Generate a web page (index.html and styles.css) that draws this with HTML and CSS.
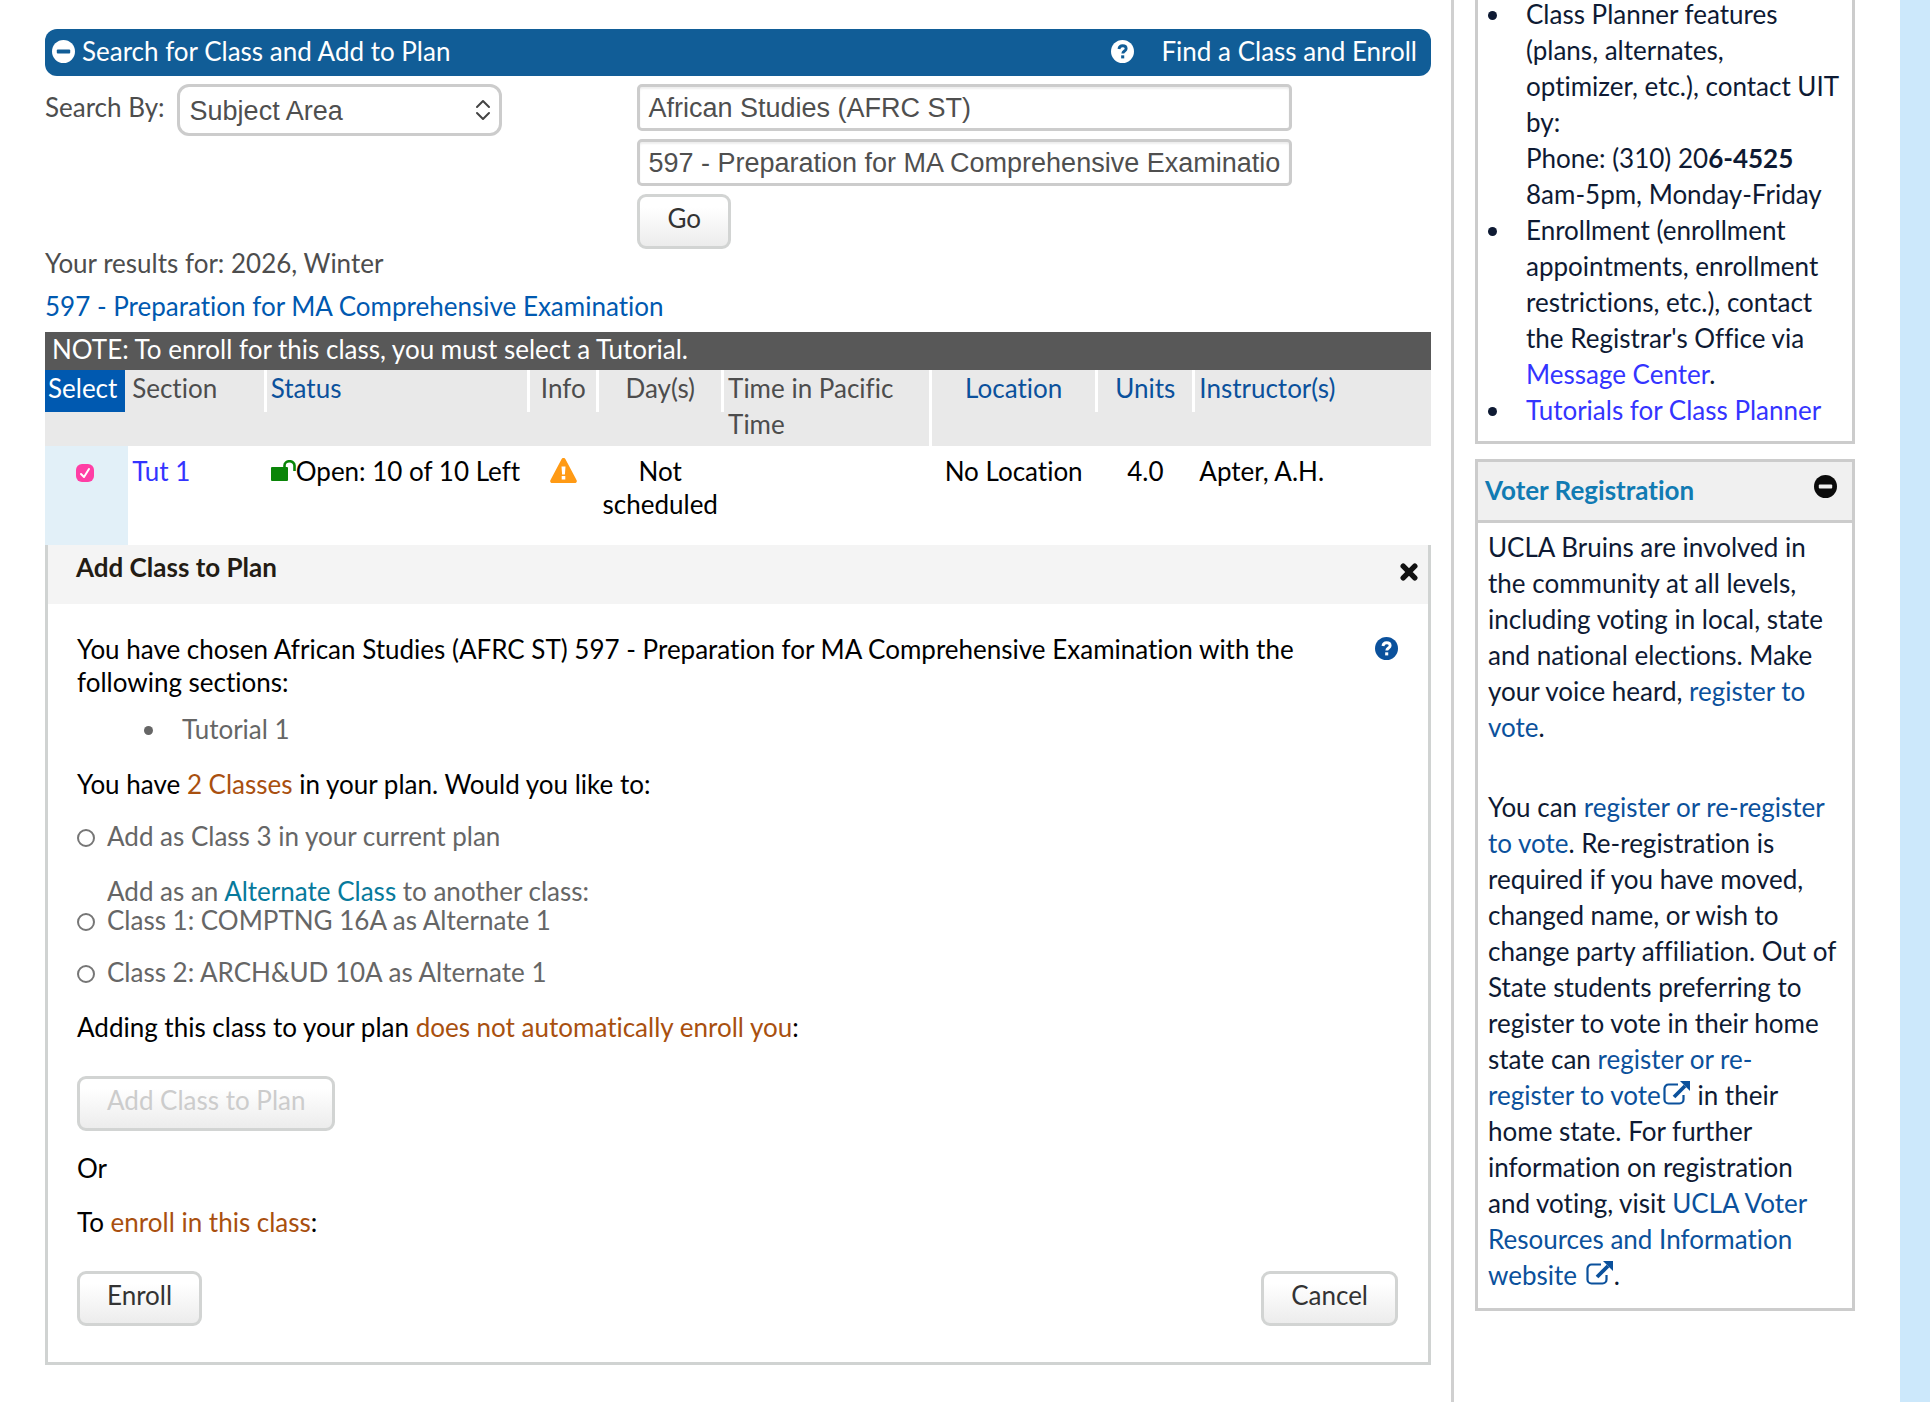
FILE: index.html
```html
<!DOCTYPE html>
<html lang="en">
<head>
<meta charset="utf-8">
<title>Class Planner</title>
<link rel="stylesheet" href="styles.css">
</head>
<body>
<div class="page">
  <main class="main">
    <div class="search-bar">
      <button class="search-toggle" type="button">
        <svg class="icon icon-round" viewBox="0 0 24 24" aria-hidden="true"><circle cx="12" cy="12" r="12" fill="#fff"/><rect x="5" y="10" width="14" height="4" rx="1" fill="#115d97"/></svg>
        Search for Class and Add to Plan
      </button>
      <div class="search-links">
        <svg class="icon icon-round" viewBox="0 0 24 24" aria-hidden="true"><circle cx="12" cy="12" r="12" fill="#fff"/><path d="M8.3 9.4C8.6 7.2 10 6 12.1 6c2.2 0 3.7 1.2 3.7 3 0 2.4-3.5 2.6-3.5 5.2" fill="none" stroke="#115d97" stroke-width="3"/><rect x="10.6" y="16" width="3.2" height="3.2" fill="#115d97"/></svg>
        <a href="#find">Find a Class and Enroll</a>
      </div>
    </div>

    <form class="search-form">
      <div class="search-by">
        <label for="search-by">Search By:</label>
        <select id="search-by" class="field select"><option>Subject Area</option></select>
      </div>
      <div class="search-fields">
        <input class="field text-field" type="text" aria-label="Subject area" value="African Studies (AFRC ST)">
        <input class="field text-field" type="text" aria-label="Class" value="597 - Preparation for MA Comprehensive Examination">
        <button class="button" type="button">Go</button>
      </div>
    </form>

    <p class="results-for">Your results for: 2026, Winter</p>
    <p class="class-title"><a href="#class">597 - Preparation for MA Comprehensive Examination</a></p>

    <p class="note">NOTE: To enroll for this class, you must select a Tutorial.</p>
    <table class="sections">
      <colgroup><col class="w-select"><col class="w-section"><col class="w-status"><col class="w-info"><col class="w-days"><col class="w-time"><col class="w-location"><col class="w-units"><col class="w-instructor"></colgroup>
      <thead>
        <tr>
          <th class="select-head" scope="col">Select</th>
          <th scope="col">Section</th>
          <th scope="col"><a href="#status">Status</a></th>
          <th class="center" scope="col">Info</th>
          <th class="center" scope="col">Day(s)</th>
          <th class="tall" scope="col">Time in Pacific Time</th>
          <th class="center" scope="col"><a href="#location">Location</a></th>
          <th class="center" scope="col"><a href="#units">Units</a></th>
          <th class="last" scope="col"><a href="#instructor">Instructor(s)</a></th>
        </tr>
      </thead>
      <tbody>
        <tr>
          <td class="select-cell"><input class="check" type="checkbox" aria-label="Select Tutorial 1" checked></td>
          <td><a class="bright" href="#tut1">Tut 1</a></td>
          <td><svg class="lock" viewBox="0 0 25 21" aria-hidden="true"><rect x="0" y="7" width="17" height="14" rx="1" fill="#0a8508"/><path d="M13.500 8V5.500a5 4.300 0 0 1 10 0V11" fill="none" stroke="#0a8508" stroke-width="2.600"/></svg>Open: 10 of 10 Left</td>
          <td class="center"><svg class="warn" viewBox="0 0 27 25" aria-label="Warning"><path d="M13.500 0c1 0 1.600.5 2 1.200l11 20.800c.8 1.500 0 3-1.800 3H2.300c-1.800 0-2.600-1.500-1.800-3l11-20.800c.4-.7 1-1.200 2-1.200z" fill="#ff9a14"/><path d="M11.500 8.500h4l-.6 8h-2.800zM11.700 18h3.600v3.500h-3.600z" fill="#fff"/></svg></td>
          <td class="center">Not scheduled</td>
          <td></td>
          <td class="center">No Location</td>
          <td class="center">4.0</td>
          <td>Apter, A.H.</td>
        </tr>
      </tbody>
    </table>

    <section class="panel">
      <header class="panel-head">
        <h2>Add Class to Plan</h2>
        <button class="close" type="button" aria-label="Close"><svg viewBox="0 0 18 18" aria-hidden="true"><path d="M3.200 3.200l11.600 11.600M14.800 3.200L3.200 14.800" stroke="#111" stroke-width="5.400" stroke-linecap="round"/></svg></button>
      </header>
      <div class="panel-body">
        <div class="chosen">
          <p>You have chosen African Studies (AFRC ST) 597 - Preparation for MA Comprehensive Examination with the following sections:</p>
          <svg class="icon icon-round" viewBox="0 0 24 24" aria-label="Help"><circle cx="12" cy="12" r="12" fill="#0b519c"/><path d="M8.300 9.400C8.600 7.200 10 6 12.100 6c2.200 0 3.700 1.200 3.700 3 0 2.400-3.500 2.600-3.500 5.200" fill="none" stroke="#fff" stroke-width="3"/><rect x="10.600" y="16" width="3.200" height="3.200" fill="#fff"/></svg>
        </div>
        <ul class="chosen-list"><li>Tutorial 1</li></ul>
        <p class="question">You have <span class="accent">2 Classes</span> in your plan. Would you like to:</p>
        <div class="options">
          <label class="option"><input class="radio" type="radio" name="plan">Add as Class 3 in your current plan</label>
          <p class="option-title">Add as an <a class="teal" href="#alternate">Alternate Class</a> to another class:</p>
          <label class="option"><input class="radio" type="radio" name="plan">Class 1: COMPTNG 16A as Alternate 1</label>
          <label class="option spaced"><input class="radio" type="radio" name="plan">Class 2: ARCH&amp;UD 10A as Alternate 1</label>
        </div>
        <p class="adding">Adding this class to your plan <span class="accent">does not automatically enroll you</span>:</p>
        <button class="button" type="button" disabled>Add Class to Plan</button>
        <p class="step">Or</p>
        <p class="step">To <span class="accent">enroll in this class</span>:</p>
        <div class="actions">
          <button class="button" type="button">Enroll</button>
          <button class="button" type="button">Cancel</button>
        </div>
      </div>
    </section>
  </main>

  <aside class="side">
    <section class="box help-box">
      <ul>
        <li>Class Planner features (plans, alternates, optimizer, etc.), contact UIT by:<br>Phone: (310) 20<b>6-4525</b><br>8am-5pm, Monday-Friday</li>
        <li>Enrollment (enrollment appointments, enrollment restrictions, etc.), contact the Registrar's Office via <a class="bright" href="#messages">Message Center</a>.</li>
        <li><a class="bright" href="#tutorials">Tutorials for Class Planner</a></li>
      </ul>
    </section>
    <section class="box">
      <header class="box-head">
        <h2>Voter Registration</h2>
        <button class="collapse" type="button" aria-label="Collapse"><svg class="icon icon-round" viewBox="0 0 24 24" aria-hidden="true"><circle cx="12" cy="12" r="12" fill="#0b0b0b"/><rect x="5" y="10" width="14" height="4" rx="1" fill="#f0f0f0"/></svg></button>
      </header>
      <div class="box-body">
        <p>UCLA Bruins are involved in the community at all levels, including voting in local, state and national elections. Make your voice heard, <a href="#r1">register to vote</a>.</p>
        <p>You can <a href="#r2">register or re-register to vote</a>. Re-registration is required if you have moved, changed name, or wish to change party affiliation. Out of State students preferring to register to vote in their home state can <a href="#r3">register or re-register to vote<svg class="external" viewBox="0 0 30 24" aria-hidden="true"><path d="M17 3.500H7.500a4 4 0 0 0-4 4v11a4 4 0 0 0 4 4h11a4 4 0 0 0 4-4V14" fill="none" stroke="#0b519c" stroke-width="2.200"/><path d="M13 16L24 5" stroke="#0b519c" stroke-width="3.800"/><path d="M19 0h10v10z" fill="#0b519c"/></svg></a> in their home state. For further information on registration and voting, visit <a href="#r4">UCLA Voter Resources and Information website <svg class="external" viewBox="0 0 30 24" aria-hidden="true"><path d="M17 3.500H7.500a4 4 0 0 0-4 4v11a4 4 0 0 0 4 4h11a4 4 0 0 0 4-4V14" fill="none" stroke="#0b519c" stroke-width="2.200"/><path d="M13 16L24 5" stroke="#0b519c" stroke-width="3.800"/><path d="M19 0h10v10z" fill="#0b519c"/></svg></a>.</p>
      </div>
    </section>
  </aside>
</div>
</body>
</html>
```
FILE: styles.css
```css
* { box-sizing: border-box; }
body {
  margin: 0;
  background: #cce8fb;
  color: #000;
  font-family: Lato, "Open Sans", sans-serif;
  font-size: 26px;
  font-variant-ligatures: none;
  line-height: 33px;
}
p, h2, ul { margin: 0; padding: 0; }
h2 { font-size: inherit; font-weight: 700; }
a { color: #0b519c; text-decoration: none; }
button { font: inherit; cursor: pointer; }
.bright { color: #3434ff; }
.teal { color: #077a9c; }
.accent { color: #a9500f; }
.icon { display: block; flex: none; }
.icon-round { width: 23px; height: 23px; }

.page {
  display: grid;
  grid-template-columns: minmax(0, 1fr) 446px;
  min-height: 100vh;
  margin-right: 30px;
  background: #fff;
}
.main {
  padding: 29px 20px 34px 45px;
  border-right: 3px solid #d0d0d0;
}

.search-bar {
  display: flex;
  justify-content: space-between;
  align-items: center;
  height: 47px;
  padding: 0 14px 2px 7px;
  border-radius: 12px;
  background: #115d97;
  color: #fff;
}
.search-bar a { color: #fff; }
.search-toggle {
  display: flex;
  align-items: center;
  gap: 7px;
  padding: 0;
  border: 0;
  background: none;
  color: inherit;
}
.search-links { display: flex; align-items: center; gap: 27px; }

.search-form {
  display: grid;
  grid-template-columns: 592fr 793fr;
  padding-top: 8px;
  color: #4d4d4d;
}
.search-by { display: flex; align-items: flex-start; gap: 12px; }
.search-by label { padding-top: 7px; }
.field {
  border: 3px solid #ccc;
  background-color: #fff;
  color: #4f4f4f;
  font: 27px/30px "Liberation Sans", Arial, sans-serif;
}
.select {
  width: 325px;
  height: 52px;
  padding: 2px 10px 0;
  border-radius: 12px;
  appearance: none;
  background: #fff url("data:image/svg+xml,%3Csvg xmlns='http://www.w3.org/2000/svg' width='16' height='22' fill='none' stroke='%23444' stroke-width='2' stroke-linecap='round' stroke-linejoin='round'%3E%3Cpath d='M2 8l6-6 6 6M2 14l6 6 6-6'/%3E%3C/svg%3E") no-repeat right 8px center;
}
.search-fields { display: flex; flex-direction: column; align-items: flex-start; gap: 8px; }
.text-field {
  width: 655px;
  max-width: 100%;
  height: 47px;
  padding: 2px 8px 0;
  border-radius: 5px;
  box-shadow: inset 0 2px 2px #eee;
}
.button {
  padding: 5px 27px 11px;
  border: 3px solid #d2d4d3;
  border-radius: 9px;
  background: linear-gradient(#fff 20%, #ececec);
  color: #333;
}
.button:disabled { color: #ccc; }

.results-for { color: #4d4d4d; line-height: 29px; }
.class-title { padding: 12px 0 9px; }
.class-title a { color: #0059b0; }
.note { padding: 1px 7px 4px; background: #585858; color: #fff; }

.sections { width: 100%; border-collapse: collapse; table-layout: fixed; }
.w-select { width: 6%; }
.w-section { width: 10%; }
.w-status { width: 19%; }
.w-info { width: 5%; }
.w-days { width: 9%; }
.w-time { width: 15%; }
.w-location { width: 12%; }
.w-units { width: 7%; }
.w-instructor { width: 17%; }
.sections th {
  height: 76px;
  padding: 0 4px;
  background: linear-gradient(#fff, #fff) no-repeat right top / 3px 42px #e9e9e9;
  color: #4d4d4d;
  font-weight: 400;
  line-height: 36px;
  text-align: left;
  vertical-align: top;
}
.sections th.tall { background-size: 3px 100%; }
.sections th.last { background-image: none; }
.sections th.select-head {
  padding: 0 3px;
  background: linear-gradient(#0059b0, #0059b0) no-repeat left top / 80px 42px #e9e9e9;
  color: #fff;
}
.sections td { height: 99px; padding: 9px 0 0 4px; vertical-align: top; }
.sections .center { padding-right: 3px; padding-left: 0; text-align: center; }
.sections .select-cell { padding: 8px 4px 0 0; background: #e2f0f8; text-align: center; }
.check {
  width: 18px;
  height: 18px;
  margin: 0;
  border-radius: 6px;
  appearance: none;
  background: #ff3ea5 url("data:image/svg+xml,%3Csvg xmlns='http://www.w3.org/2000/svg' width='18' height='18' fill='none' stroke='white' stroke-width='2' stroke-linecap='round' stroke-linejoin='round'%3E%3Cpath d='M5 10l3 3 5-8'/%3E%3C/svg%3E");
  vertical-align: middle;
}
.lock { width: 25px; height: 21px; }
.warn { width: 27px; height: 25px; vertical-align: -2px; }

.panel { border: 3px solid #d0d3d2; border-top: 0; }
.panel-head {
  display: flex;
  justify-content: space-between;
  align-items: center;
  padding: 6px 10px 20px 28px;
  background: #f4f4f4;
  color: #231c14;
}
.close { display: block; padding: 8px 0 0; border: 0; background: none; }
.close svg { display: block; width: 18px; height: 18px; }
.panel-body { padding: 29px 30px 36px 29px; }
.chosen { display: flex; justify-content: space-between; gap: 40px; }
.chosen .icon { margin-top: 4px; }
.chosen-list { padding: 14px 0 22px 91px; color: #666; }
li { padding-left: 14px; }
.options { padding: 21px 0 25px; color: #666; line-height: 28px; }
.option { display: flex; align-items: center; gap: 12px; }
.option-title { padding: 27px 0 1px 30px; }
.spaced { padding-top: 24px; }
.radio {
  width: 18px;
  height: 18px;
  margin: 4px 0 0;
  border: 2px solid #767676;
  border-radius: 50%;
  appearance: none;
}
.adding { padding-bottom: 32px; }
.step { padding-top: 21px; }
.actions { display: flex; justify-content: space-between; padding-top: 32px; }

.side { padding: 0 45px 0 21px; color: #0e1a33; line-height: 36px; }
.box { border: 3px solid #ccc; }
.help-box { margin-bottom: 15px; border-top: 0; }
.help-box ul { padding: 0 13px 13px 34px; margin-top: -4px; }
.box-head {
  display: flex;
  justify-content: space-between;
  align-items: flex-start;
  padding: 10px 15px 12px 7px;
  border-bottom: 3px solid #ccc;
  background: #f0f0f0;
  color: #117bb3;
}
.collapse { padding: 3px 0 0; border: 0; background: none; }
.box-body { padding: 6px 15px 15px 10px; }
.box-body p + p { padding-top: 44px; }
.external { width: 30px; height: 24px; }
```
